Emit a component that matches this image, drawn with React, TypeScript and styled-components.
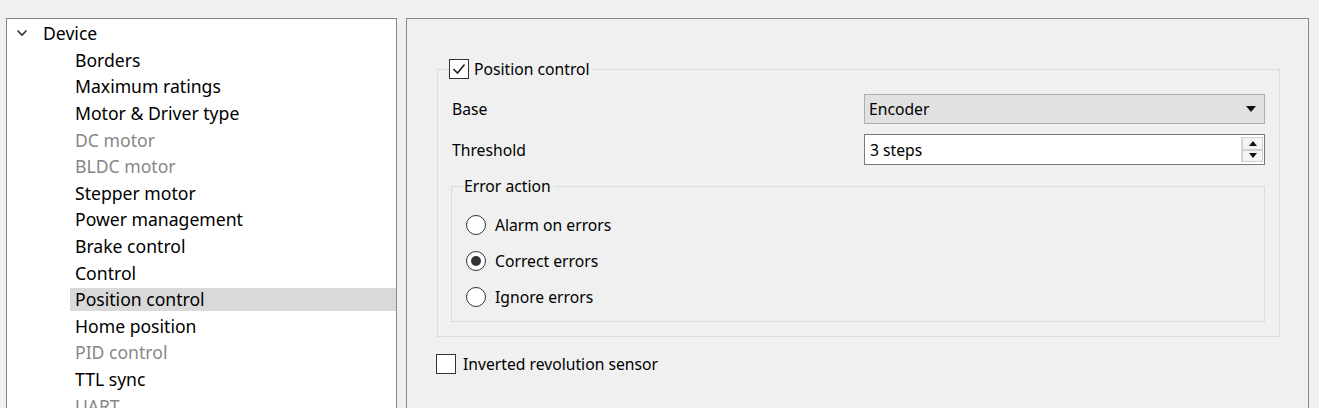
import styled, { createGlobalStyle } from "styled-components";

const GlobalStyle = createGlobalStyle`
  html, body {
    margin: 0;
    padding: 0;
    height: 408px;
    overflow: hidden;
    background: #f0f0f0;
  }
  * {
    box-sizing: border-box;
  }
`;

const Page = styled.div`
  display: flex;
  gap: 9px;
  padding: 18px 10px 0 6px;
  height: 408px;
  font-family: "Noto Sans", "Open Sans", sans-serif;
  color: #000;
`;

const TreePanel = styled.div`
  width: 391px;
  height: 420px;
  flex: none;
  background: #fff;
  border: 1px solid #828790;
  padding-top: 1px;
`;

const TreeRow = styled.div<{ $indent: number }>`
  height: 26.6px;
  display: flex;
  align-items: center;
  padding-left: ${(p) => p.$indent}px;
`;

const TreeLabel = styled.div<{ $selected?: boolean; $disabled?: boolean }>`
  flex: 1;
  height: 23px;
  display: flex;
  align-items: center;
  padding-left: 5px;
  font-size: 17.6px;
  white-space: nowrap;
  background: ${(p) => (p.$selected ? "#d9d9d9" : "transparent")};
  color: ${(p) => (p.$disabled ? "#878787" : "#000")};
`;

const Chevron = styled.span`
  width: 22px;
  display: flex;
  align-items: center;
  margin-left: 9px;
`;

const SettingsPanel = styled.div`
  flex: 1;
  height: 420px;
  border: 1px solid #828790;
  padding: 40px 28px 0 30px;
`;

const GroupBox = styled.fieldset<{ $inner?: boolean }>`
  margin: 0;
  border: 1px solid #dcdcdc;
  padding: ${(p) => (p.$inner ? "0 14px 14px 14px" : "0 14px 14px 13px")};
  min-width: 0;
`;

const GroupTitle = styled.legend<{ $shift: number }>`
  margin-left: ${(p) => p.$shift}px;
  padding: 0 3px 0 0;
  font-size: 15.7px;
  display: flex;
  align-items: center;
  gap: 5px;
  height: 20px;
`;

const FormRow = styled.div<{ $top: number }>`
  display: flex;
  align-items: center;
  justify-content: space-between;
  margin-top: ${(p) => p.$top}px;
  font-size: 15.7px;
`;

const FieldLabel = styled.span`
  padding-left: 1px;
`;

const ComboBox = styled.div`
  width: 401px;
  height: 30px;
  background: #e1e1e1;
  border: 1px solid #adadad;
  display: flex;
  align-items: center;
  justify-content: space-between;
  padding: 0 8px 0 4px;
  font-size: 15.7px;
`;

const SpinBox = styled.div`
  width: 401px;
  height: 31px;
  background: #fff;
  border: 1px solid #7a7a7a;
  display: flex;
  align-items: center;
  justify-content: space-between;
  padding: 0 1px 0 5px;
  font-size: 15.7px;
`;

const SpinButtons = styled.div`
  width: 22px;
  height: 25px;
  display: flex;
  flex-direction: column;
  border-left: 1px solid #dadada;
`;

const SpinButton = styled.div`
  flex: 1;
  display: flex;
  align-items: center;
  justify-content: center;
  background: #f4f4f4;
  border: 1px solid #d0d0d0;
`;

const RadioRow = styled.label<{ $top: number }>`
  display: flex;
  align-items: center;
  gap: 9px;
  margin-top: ${(p) => p.$top}px;
  font-size: 15.7px;
  height: 20px;
`;

const RadioCircle = styled.span<{ $checked?: boolean }>`
  width: 20px;
  height: 20px;
  border-radius: 50%;
  border: 1px solid #333;
  background: #fff;
  display: flex;
  align-items: center;
  justify-content: center;
  flex: none;
  &::after {
    content: "";
    width: 10px;
    height: 10px;
    border-radius: 50%;
    background: ${(p) => (p.$checked ? "#333" : "transparent")};
  }
`;

const CheckBox = styled.span`
  width: 20px;
  height: 20px;
  border: 1px solid #333;
  background: #fff;
  flex: none;
  display: flex;
  align-items: center;
  justify-content: center;
`;

const CheckRow = styled.label`
  display: flex;
  align-items: center;
  gap: 7px;
  margin-top: 16px;
  margin-left: -1px;
  font-size: 15.7px;
`;

const treeItems: { label: string; disabled?: boolean; selected?: boolean }[] = [
  { label: "Borders" },
  { label: "Maximum ratings" },
  { label: "Motor & Driver type" },
  { label: "DC motor", disabled: true },
  { label: "BLDC motor", disabled: true },
  { label: "Stepper motor" },
  { label: "Power management" },
  { label: "Brake control" },
  { label: "Control" },
  { label: "Position control", selected: true },
  { label: "Home position" },
  { label: "PID control", disabled: true },
  { label: "TTL sync" },
  { label: "UART", disabled: true },
];

const checkMark = (
  <svg width="16" height="16" viewBox="0 0 16 16">
    <polyline points="2.5,8 6.5,12 13.5,3.5" fill="none" stroke="#222" strokeWidth="1.6" />
  </svg>
);

const App = () => {
  return (
    <>
      <GlobalStyle />
      <Page>
        <TreePanel>
          <TreeRow $indent={0}>
            <Chevron>
              <svg width="12" height="8" viewBox="0 0 12 8">
                <polyline points="1.5,1.5 6,6 10.5,1.5" fill="none" stroke="#333" strokeWidth="1.6" />
              </svg>
            </Chevron>
            <TreeLabel>Device</TreeLabel>
          </TreeRow>
          {treeItems.map((item) => (
            <TreeRow key={item.label} $indent={63}>
              <TreeLabel $selected={item.selected} $disabled={item.disabled}>
                {item.label}
              </TreeLabel>
            </TreeRow>
          ))}
        </TreePanel>
        <SettingsPanel>
          <GroupBox>
            <GroupTitle $shift={-2}>
              <CheckBox>{checkMark}</CheckBox>
              Position control
            </GroupTitle>
            <FormRow $top={15}>
              <FieldLabel>Base</FieldLabel>
              <ComboBox>
                Encoder
                <svg width="10" height="6" viewBox="0 0 10 6">
                  <polygon points="0,0 10,0 5,6" fill="#111" />
                </svg>
              </ComboBox>
            </FormRow>
            <FormRow $top={10}>
              <FieldLabel>Threshold</FieldLabel>
              <SpinBox>
                3 steps
                <SpinButtons>
                  <SpinButton>
                    <svg width="8" height="5" viewBox="0 0 8 5">
                      <polygon points="0,5 8,5 4,0" fill="#111" />
                    </svg>
                  </SpinButton>
                  <SpinButton>
                    <svg width="8" height="5" viewBox="0 0 8 5">
                      <polygon points="0,0 8,0 4,5" fill="#111" />
                    </svg>
                  </SpinButton>
                </SpinButtons>
              </SpinBox>
            </FormRow>
            <GroupBox $inner style={{ marginTop: 11 }}>
              <GroupTitle $shift={-2}>Error action</GroupTitle>
              <RadioRow $top={19}>
                <RadioCircle />
                Alarm on errors
              </RadioRow>
              <RadioRow $top={16}>
                <RadioCircle $checked />
                Correct errors
              </RadioRow>
              <RadioRow $top={16}>
                <RadioCircle />
                Ignore errors
              </RadioRow>
            </GroupBox>
          </GroupBox>
          <CheckRow>
            <CheckBox />
            Inverted revolution sensor
          </CheckRow>
        </SettingsPanel>
      </Page>
    </>
  );
};

export default App;
